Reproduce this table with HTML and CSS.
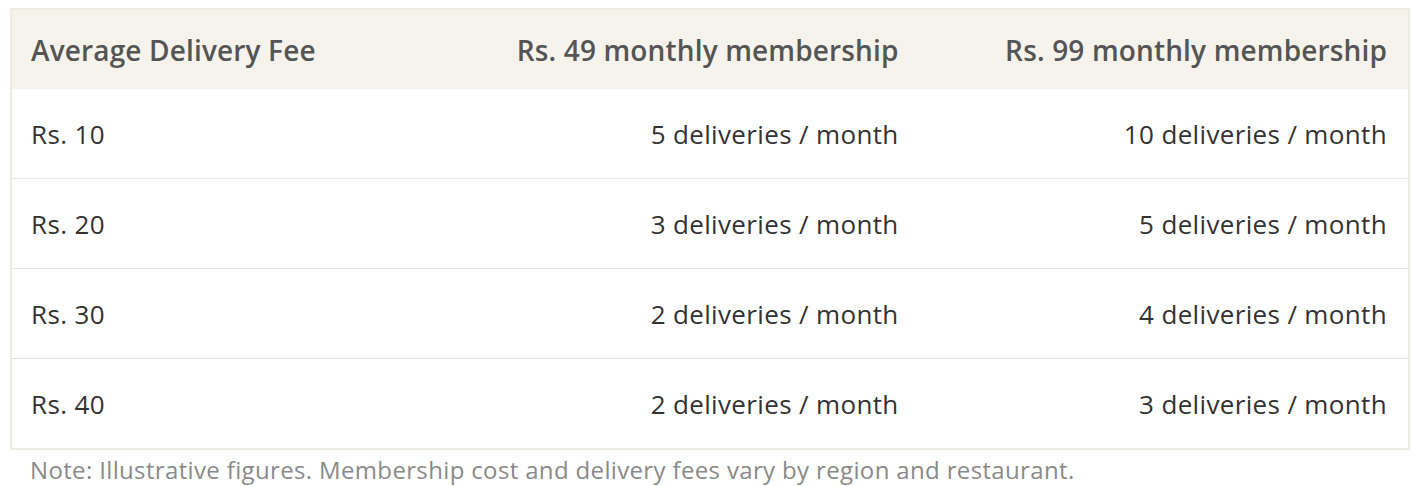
FILE: index.html
```html
<!DOCTYPE html>
<html lang="en">
<head>
<meta charset="utf-8">
<link rel="stylesheet" href="styles.css">
</head>
<body>
<div class="wrap">
  <table class="fees">
    <thead>
      <tr>
        <th class="c1">Average Delivery Fee</th>
        <th class="c2">Rs. 49 monthly membership</th>
        <th class="c3">Rs. 99 monthly membership</th>
      </tr>
    </thead>
    <tbody>
      <tr><td class="c1">Rs. 10</td><td class="c2">5 deliveries / month</td><td class="c3">10 deliveries / month</td></tr>
      <tr><td class="c1">Rs. 20</td><td class="c2">3 deliveries / month</td><td class="c3">5 deliveries / month</td></tr>
      <tr><td class="c1">Rs. 30</td><td class="c2">2 deliveries / month</td><td class="c3">4 deliveries / month</td></tr>
      <tr><td class="c1">Rs. 40</td><td class="c2">2 deliveries / month</td><td class="c3">3 deliveries / month</td></tr>
    </tbody>
  </table>
  <p class="note">Note: Illustrative figures. Membership cost and delivery fees vary by region and restaurant.</p>
</div>
</body>
</html>
```
FILE: styles.css
```css
html, body {
  margin: 0;
  padding: 0;
  background: #ffffff;
}
body {
  font-family: "Open Sans", Lato, sans-serif;
}
.wrap {
  padding: 8px 8px 0 10px;
}
.fees {
  width: 1400px;
  border-collapse: collapse;
  border: 2px solid #eeebe2;
}
.fees th, .fees td {
  padding: 0 21px 0 19px;
  vertical-align: middle;
}
.fees th {
  height: 79px;
  background: #f5f3ec;
  color: #555555;
  font-size: 28px;
  font-weight: 600;
  letter-spacing: 0.15px;
  text-align: left;
}
.fees td {
  height: 89px;
  color: #333333;
  font-size: 26px;
  font-weight: 400;
  letter-spacing: 0.35px;
  border-top: 1px solid #e6e6e6;
}
.fees tbody tr:first-child td {
  border-top: 0;
}
.c1 { width: 379px; }
.c2 { width: 446px; text-align: right !important; }
.c3 { width: 447px; text-align: right !important; }
.note {
  margin: 5px 0 0 20px;
  line-height: 1.25;
  color: #8a8a8a;
  font-size: 24px;
  letter-spacing: 0.35px;
}
```
